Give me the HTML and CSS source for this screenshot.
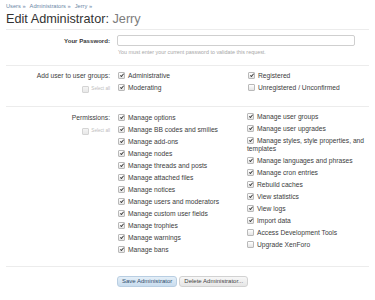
FILE: index.html
```html
<!DOCTYPE html>
<html lang="en">
<head>
<meta charset="utf-8">
<title>Edit Administrator: Jerry</title>
<link rel="stylesheet" href="styles.css">
</head>
<body>
<div class="page">
  <nav class="crumbs">
    <a class="crumb" href="#">Users »</a>
    <a class="crumb" href="#">Administrators »</a>
    <a class="crumb" href="#">Jerry »</a>
  </nav>
  <h1 class="title">Edit Administrator: <span class="name">Jerry</span></h1>

  <form class="form">
    <div class="row row-pw">
      <div class="lbl"><span class="lbl-bold">Your Password:</span></div>
      <div class="ctrl">
        <div class="input"></div>
        <p class="hint">You must enter your current password to validate this request.</p>
      </div>
    </div>

    <div class="row row-groups">
      <div class="lbl">
        <div class="lbl-text">Add user to user groups:</div>
        <div class="select-all"><span class="cb cb-dis"></span>Select all</div>
      </div>
      <div class="ctrl">
        <div class="cols">
          <ul class="list">
            <li><span class="cb on"></span>Administrative</li>
            <li><span class="cb on"></span>Moderating</li>
          </ul>
          <ul class="list">
            <li><span class="cb on"></span>Registered</li>
            <li><span class="cb"></span>Unregistered / Unconfirmed</li>
          </ul>
        </div>
      </div>
    </div>

    <div class="row row-perms">
      <div class="lbl">
        <div class="lbl-text">Permissions:</div>
        <div class="select-all"><span class="cb cb-dis"></span>Select all</div>
      </div>
      <div class="ctrl">
        <div class="cols">
          <ul class="list">
            <li><span class="cb on"></span>Manage options</li>
            <li><span class="cb on"></span>Manage BB codes and smilies</li>
            <li><span class="cb on"></span>Manage add-ons</li>
            <li><span class="cb on"></span>Manage nodes</li>
            <li><span class="cb on"></span>Manage threads and posts</li>
            <li><span class="cb on"></span>Manage attached files</li>
            <li><span class="cb on"></span>Manage notices</li>
            <li><span class="cb on"></span>Manage users and moderators</li>
            <li><span class="cb on"></span>Manage custom user fields</li>
            <li><span class="cb on"></span>Manage trophies</li>
            <li><span class="cb on"></span>Manage warnings</li>
            <li><span class="cb on"></span>Manage bans</li>
          </ul>
          <ul class="list list-right">
            <li><span class="cb on"></span>Manage user groups</li>
            <li><span class="cb on"></span>Manage user upgrades</li>
            <li><span class="cb on"></span>Manage styles, style properties, and templates</li>
            <li><span class="cb on"></span>Manage languages and phrases</li>
            <li><span class="cb on"></span>Manage cron entries</li>
            <li><span class="cb on"></span>Rebuild caches</li>
            <li><span class="cb on"></span>View statistics</li>
            <li><span class="cb on"></span>View logs</li>
            <li><span class="cb on"></span>Import data</li>
            <li><span class="cb"></span>Access Development Tools</li>
            <li><span class="cb"></span>Upgrade XenForo</li>
          </ul>
        </div>
      </div>
    </div>

    <div class="row row-buttons">
      <div class="lbl"></div>
      <div class="ctrl buttons">
        <span class="btn btn-primary">Save Administrator</span>
        <span class="btn">Delete Administrator...</span>
      </div>
    </div>
  </form>
</div>
</body>
</html>
```

FILE: styles.css
```css
html, body {
  margin: 0;
  padding: 0;
  background: #fff;
}
body {
  font-family: "Liberation Sans", Arial, sans-serif;
  color: #3a3a3a;
}
.page {
  padding: 2px 6px 0 6px;
}
.crumbs {
  display: flex;
  gap: 4px;
  font-size: 5.7px;
  line-height: 8px;
}
.crumb {
  color: #6a86a6;
  text-decoration: none;
}
.title {
  margin: 2px 0 0 0;
  font-weight: normal;
  font-size: 12.7px;
  line-height: 14px;
  color: #333;
  padding-bottom: 3px;
}
.name {
  color: #7d7d7d;
}
.form {
  margin: 0;
}
.row {
  display: grid;
  grid-template-columns: 104px 1fr;
  column-gap: 7px;
  border-top: 1px solid #ececec;
}
.lbl {
  text-align: right;
  font-size: 6.7px;
  line-height: 12px;
  color: #404040;
}
.lbl-bold {
  font-weight: bold;
  font-size: 6.1px;
  color: #383838;
}
.row-pw {
  padding: 5px 0 10px 0;
}
.row-pw .lbl {
  line-height: 11px;
}
.input {
  height: 9px;
  width: 236px;
  border: 1px solid #cfcfcf;
  border-radius: 2px;
  background: #fff;
}
.hint {
  margin: 3px 0 0 1px;
  font-size: 5.4px;
  line-height: 6px;
  color: #a8a8a8;
}
.row-groups {
  padding: 4px 0 12px 0;
}
.row-perms {
  padding: 5px 0 10px 0;
}
.select-all {
  font-size: 4.6px;
  color: #bdbdbd;
  line-height: 10px;
  padding-top: 2px;
  display: flex;
  justify-content: flex-end;
  align-items: center;
  gap: 1px;
}
.cols {
  display: grid;
  grid-template-columns: 130px 1fr;
}
.list {
  list-style: none;
  margin: 0;
  padding: 0 0 0 1px;
}
.list li {
  font-size: 6.7px;
  line-height: 8px;
  padding: 2px 0;
  color: #3c3c3c;
}
.list-right {
  margin-top: -1px;
  padding-left: 0;
}
.cb {
  display: inline-block;
  position: relative;
  width: 5px;
  height: 5px;
  border: 1px solid #b9b9b9;
  border-radius: 1px;
  background: linear-gradient(#ffffff, #e4e4e4);
  vertical-align: -1px;
  margin-right: 3px;
}
.cb.on::after {
  content: "";
  position: absolute;
  left: 2px;
  top: 0px;
  width: 1.2px;
  height: 3px;
  border-right: 1px solid #3d3d3d;
  border-bottom: 1px solid #3d3d3d;
  transform: rotate(40deg);
}
.cb-dis {
  border-color: #d4d4d4;
  background: linear-gradient(#f4f4f4, #e8e8e8);
  margin-right: 1px;
  vertical-align: 0;
}
.row-buttons {
  padding: 9px 0 20px 0;
}
.buttons {
  display: flex;
  gap: 2px;
  align-items: center;
}
.btn {
  display: inline-block;
  font-size: 6px;
  line-height: 9px;
  padding: 0 4px;
  border: 1px solid #d2d2d2;
  border-radius: 3px;
  background: linear-gradient(#f7f7f7, #e6e6e6);
  color: #444;
}
.btn-primary {
  border-color: #b9cee2;
  background: linear-gradient(#e4eff8, #c8dcee);
  color: #2f4c6c;
}
```
